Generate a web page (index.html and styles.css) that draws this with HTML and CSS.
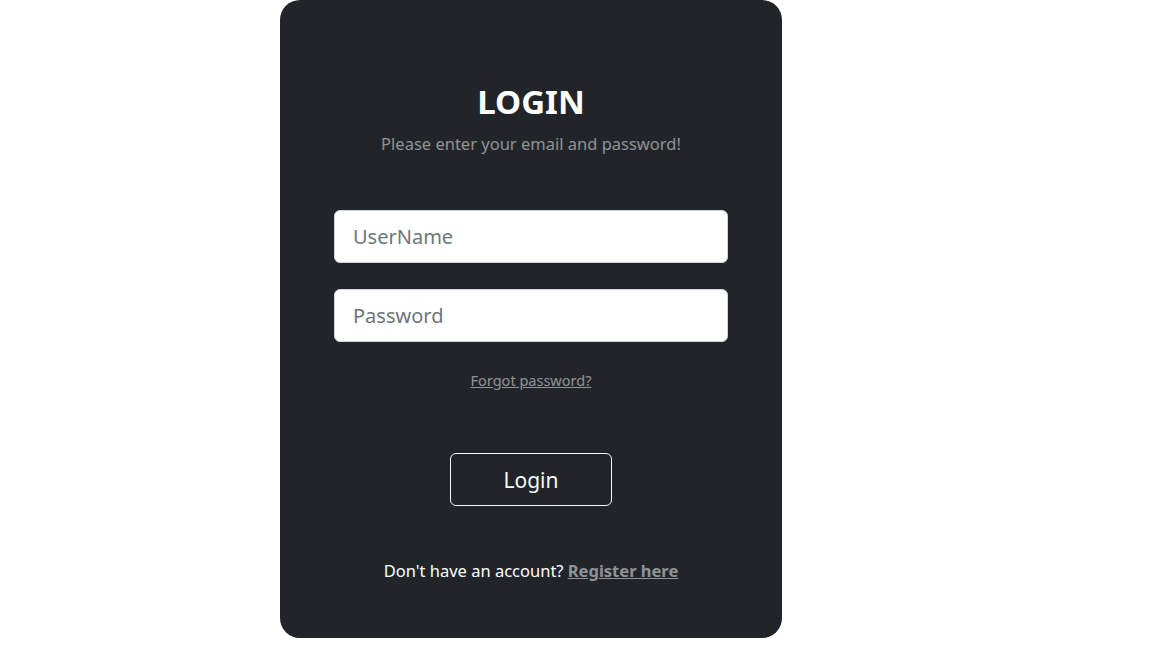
FILE: index.html
```html
<!DOCTYPE html>
<html lang="en">
<head>
  <meta charset="UTF-8">
  <meta name="viewport" content="width=device-width, initial-scale=1.0">
  <title>Login</title>
  <link rel="stylesheet" href="styles.css">
</head>
<body>
  <div class="page">
    <div class="card">
      <h2 class="title">LOGIN</h2>
      <p class="subtitle">Please enter your email and password!</p>

      <form class="login-form" onsubmit="return false;">
        <input type="text" class="field" placeholder="UserName">
        <input type="password" class="field" placeholder="Password">

        <p class="forgot"><a href="#">Forgot password?</a></p>

        <button type="submit" class="btn-login">Login</button>
      </form>

      <p class="register">Don't have an account? <a href="#">Register here</a></p>
    </div>
  </div>
</body>
</html>
```

FILE: styles.css
```css
body {
  margin: 0;
  padding: 0;
  background: #fff;
  font-family: "Noto Sans", "Open Sans", Arial, sans-serif;
}

.page {
  display: flex;
  padding-left: 280px;
}

.card {
  width: 502px;
  height: 638px;
  box-sizing: border-box;
  background-color: #212529;
  color: #fff;
  border-radius: 20px;
  padding: 80px 54px 0;
  text-align: center;
}

.title {
  margin: 0;
  font-size: 33px;
  font-weight: bold;
  line-height: 43px;
}

.subtitle {
  margin: 9px 0 0;
  font-size: 16.5px;
  line-height: 24px;
  color: rgba(255, 255, 255, 0.5);
}

.login-form {
  display: flex;
  flex-direction: column;
  align-items: center;
  margin-top: 54px;
}

.field {
  width: 100%;
  height: 53px;
  box-sizing: border-box;
  margin-bottom: 26px;
  padding: 0 18px;
  font-family: inherit;
  font-size: 20px;
  color: #495057;
  background: #fff;
  border: 1px solid #ced4da;
  border-radius: 6px;
  outline: none;
}

.field::placeholder {
  color: #6c757d;
}

.forgot {
  margin: 2px 0 0;
  font-size: 14.5px;
  line-height: 20px;
}

.forgot a,
.register a {
  color: rgba(255, 255, 255, 0.5);
}

.btn-login {
  margin-top: 63px;
  width: 162px;
  height: 53px;
  font-family: inherit;
  font-size: 21px;
  color: #f8f9fa;
  background: transparent;
  border: 1px solid #f8f9fa;
  border-radius: 6px;
  cursor: pointer;
}

.register {
  margin: 53px 0 0;
  font-size: 16.5px;
  line-height: 24px;
}

.register a {
  font-weight: bold;
}
```
